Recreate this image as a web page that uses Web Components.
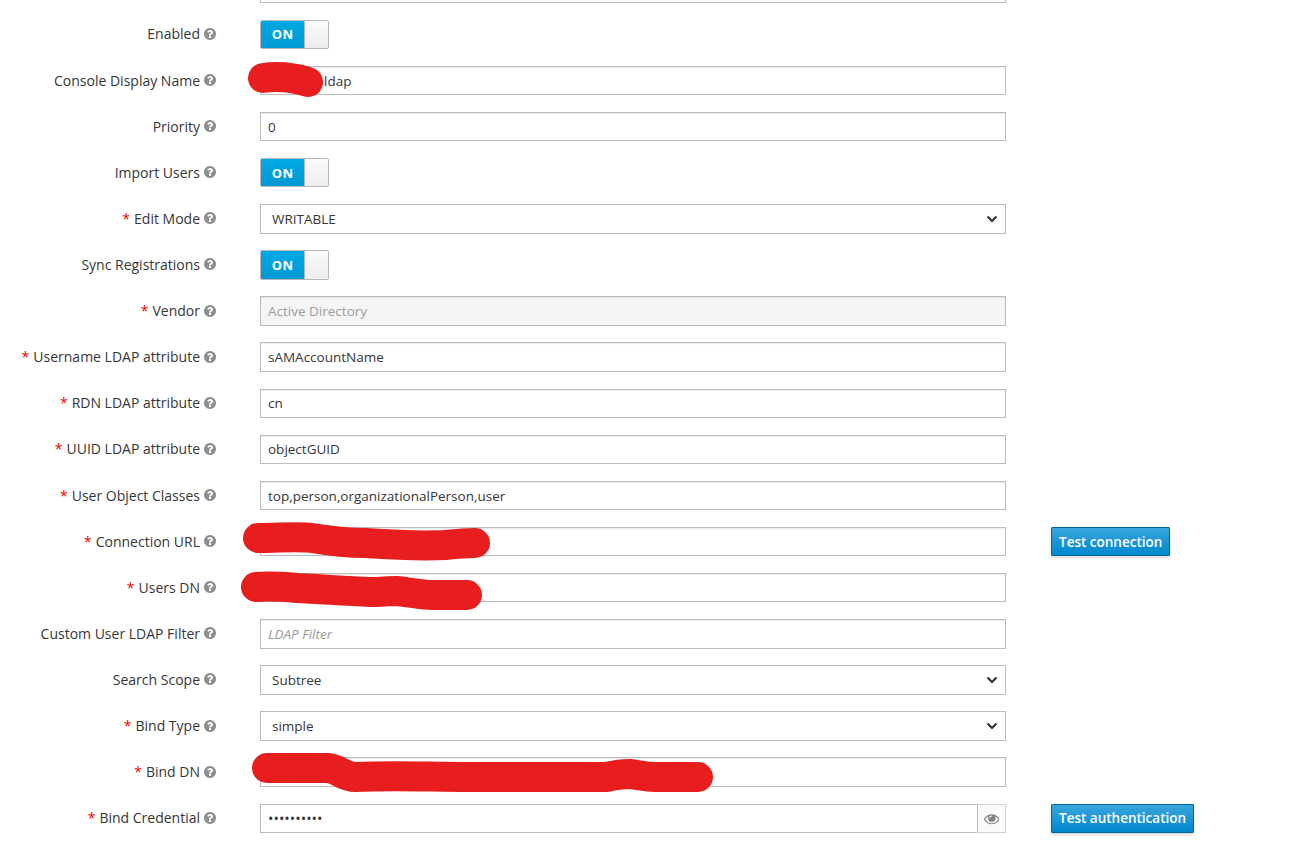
<!DOCTYPE html>
<html>
<head>
<meta charset="utf-8">
<title>LDAP settings</title>
<style>
	html, body
	{
		margin: 0;
		height: 856px;
		overflow: hidden;
		background: #fff;
		font-family: "Open Sans", "Noto Sans", sans-serif;
		font-size: 14px;
		color: #363636;
	}
</style>
</head>
<body>
<ldap-form>
	<kc-row><kc-input></kc-input></kc-row>
	<kc-row><span slot="label">Enabled</span><kc-switch></kc-switch></kc-row>
	<kc-row><span slot="label">Console Display Name</span><kc-input><span style="margin-left:56px">ldap</span></kc-input></kc-row>
	<kc-row><span slot="label">Priority</span><kc-input>0</kc-input></kc-row>
	<kc-row><span slot="label">Import Users</span><kc-switch></kc-switch></kc-row>
	<kc-row required><span slot="label">Edit Mode</span><kc-select>WRITABLE</kc-select></kc-row>
	<kc-row><span slot="label">Sync Registrations</span><kc-switch></kc-switch></kc-row>
	<kc-row required><span slot="label">Vendor</span><kc-input disabled>Active Directory</kc-input></kc-row>
	<kc-row required><span slot="label">Username LDAP attribute</span><kc-input>sAMAccountName</kc-input></kc-row>
	<kc-row required><span slot="label">RDN LDAP attribute</span><kc-input>cn</kc-input></kc-row>
	<kc-row required><span slot="label">UUID LDAP attribute</span><kc-input>objectGUID</kc-input></kc-row>
	<kc-row required><span slot="label">User Object Classes</span><kc-input>top,person,organizationalPerson,user</kc-input></kc-row>
	<kc-row required><span slot="label">Connection URL</span><kc-input></kc-input><kc-button slot="action">Test connection</kc-button></kc-row>
	<kc-row required><span slot="label">Users DN</span><kc-input></kc-input></kc-row>
	<kc-row><span slot="label">Custom User LDAP Filter</span><kc-input placeholder>LDAP Filter</kc-input></kc-row>
	<kc-row><span slot="label">Search Scope</span><kc-select>Subtree</kc-select></kc-row>
	<kc-row required><span slot="label">Bind Type</span><kc-select>simple</kc-select></kc-row>
	<kc-row required><span slot="label">Bind DN</span><kc-input></kc-input></kc-row>
	<kc-row required><span slot="label">Bind Credential</span><kc-password>••••••••••</kc-password><kc-button slot="action">Test authentication</kc-button></kc-row>
</ldap-form>
<red-scribbles></red-scribbles>

<script>
const HELP_PATH = "M1024 1376v-192q0-14-9-23t-23-9h-192q-14 0-23 9t-9 23v192q0 14 9 23t23 9h192q14 0 23-9t9-23zm256-672q0-88-55.5-163t-138.5-116-170-41q-243 0-371 213-15 24 8 42l132 100q7 6 19 6 16 0 25-12 53-68 86-92 34-24 86-24 48 0 85.5 26t37.5 59q0 38-20 61t-68 45q-63 28-115.5 86.5t-52.5 125.5v36q0 14 9 23t23 9h192q14 0 23-9t9-23q0-19 21.5-49.5t54.5-49.5q32-18 49-28.5t46-35 44.5-48 28-60.5 12.5-81zm384 192q0 209-103 385.5t-279.5 279.5-385.5 103-385.5-103-279.5-279.5-103-385.5 103-385.5 279.5-279.5 385.5-103 385.5 103 279.5 279.5 103 385.5z";
const EYE_PATH = "M1664 960q-152-236-381-353 61 104 61 225 0 185-131.5 316.5t-316.5 131.5-316.5-131.5-131.5-316.5q0-121 61-225-229 117-381 353 133 205 333.5 326.5t434.5 121.5 434.5-121.5 333.5-326.5zm-720-384q0-20-14-34t-34-14q-125 0-214.5 89.5t-89.5 214.5q0 20 14 34t34 14 34-14 14-34q0-86 61-147t147-61q20 0 34-14t14-34zm848 384q0 34-20 69-140 230-376.5 368.5t-499.5 138.5-499.5-139-376.5-368q-20-35-20-69t20-69q140-229 376.5-368t499.5-139 499.5 139 376.5 368q20 35 20 69z";

class LdapForm extends HTMLElement
{
	constructor()
	{
		super();
		this.attachShadow({ mode: "open" });
		this.shadowRoot.innerHTML = `
			<style>
				:host
				{
					display: grid;
					grid-auto-rows: 46.12px;
					margin-top: -34.75px;
				}
			</style>
			<slot></slot>
		`;
	}
}

class KcRow extends HTMLElement
{
	constructor()
	{
		super();
		this.attachShadow({ mode: "open" });
		this.shadowRoot.innerHTML = `
			<style>
				:host
				{
					display: grid;
					grid-template-columns: 216px 746px auto;
					column-gap: 44px;
					align-items: center;
				}
				.label
				{
					display: flex;
					justify-content: flex-end;
					align-items: center;
					gap: 4px;
					white-space: nowrap;
					position: relative;
					top: -.5px;
				}
				.label.empty { visibility: hidden; }
				.star { color: #e00; }
				:host(:not([required])) .star { display: none; }
				svg { width: 12px; height: 12px; fill: #8b8d8f; flex: none; }
				.action { margin-left: 1px; }
			</style>
			<div class="label">
				<span class="star">*</span>
				<slot name="label"></slot>
				<svg viewBox="128 128 1536 1536"><path d="${HELP_PATH}"/></svg>
			</div>
			<slot></slot>
			<div class="action"><slot name="action"></slot></div>
		`;
		if (!this.querySelector("[slot=label]"))
			this.shadowRoot.querySelector(".label").classList.add("empty");
	}
}

class KcInput extends HTMLElement
{
	constructor()
	{
		super();
		this.attachShadow({ mode: "open" });
		this.shadowRoot.innerHTML = `
			<style>
				:host
				{
					display: flex;
					align-items: center;
					box-sizing: border-box;
					height: 29.5px;
					padding: 0 7px;
					border: 1px solid #bbb;
					background: #fff;
					box-shadow: inset 0 1px 1px rgba(3, 3, 3, .08);
					font-size: 13.5px;
					white-space: nowrap;
				}
				:host([disabled]) { background: #f5f5f5; color: #9c9c9c; }
				:host([placeholder]) { color: #999; font-style: italic; }
			</style>
			<slot></slot>
		`;
	}
}

class KcSelect extends HTMLElement
{
	constructor()
	{
		super();
		this.attachShadow({ mode: "open" });
		this.shadowRoot.innerHTML = `
			<style>
				:host
				{
					display: flex;
					align-items: center;
					justify-content: space-between;
					box-sizing: border-box;
					height: 29.5px;
					padding: 0 6px 0 11px;
					border: 1px solid #bbb;
					background: #fff;
					font-size: 13.5px;
				}
				svg { width: 14px; height: 14px; fill: none; stroke: #333; stroke-width: 2.2; }
			</style>
			<span><slot></slot></span>
			<svg viewBox="0 0 14 14"><path d="M2.5 4.5 7 9l4.5-4.5"/></svg>
		`;
	}
}

class KcPassword extends HTMLElement
{
	constructor()
	{
		super();
		this.attachShadow({ mode: "open" });
		this.shadowRoot.innerHTML = `
			<style>
				:host
				{
					display: flex;
					box-sizing: border-box;
					height: 29.5px;
					border: 1px solid #bbb;
					border-right-color: #d1d1d1;
					background: #fff;
				}
				.value { flex: 1; display: flex; align-items: center; padding-left: 7px; font-size: 14.5px; }
				.eye
				{
					width: 27px;
					display: flex;
					align-items: center;
					justify-content: center;
					background: #fafafa;
					border-left: 1px solid #bbb;
					box-shadow: 0 -1px 0 #d1d1d1, 0 1px 0 #d1d1d1;
				}
				svg { width: 15.5px; height: 15.5px; fill: #7f8183; }
			</style>
			<div class="value"><slot></slot></div>
			<div class="eye"><svg viewBox="0 0 1792 1792"><path d="${EYE_PATH}"/></svg></div>
		`;
	}
}

class KcSwitch extends HTMLElement
{
	constructor()
	{
		super();
		this.attachShadow({ mode: "open" });
		this.shadowRoot.innerHTML = `
			<style>
				:host
				{
					display: flex;
					box-sizing: border-box;
					width: 69px;
					height: 29.5px;
					border: 1px solid #b7b7b7;
					border-radius: 2px;
					overflow: hidden;
				}
				.on
				{
					width: 43px;
					display: flex;
					align-items: center;
					justify-content: center;
					background: linear-gradient(#00a9e4, #0099d3);
					color: #fff;
					font-weight: 700;
					font-size: 13px;
					letter-spacing: .3px;
				}
				.knob
				{
					flex: 1;
					border-left: 1px solid #b7b7b7;
					background: linear-gradient(#fafafa, #ededed);
				}
			</style>
			<div class="on">ON</div>
			<div class="knob"></div>
		`;
	}
}

class KcButton extends HTMLElement
{
	constructor()
	{
		super();
		this.attachShadow({ mode: "open" });
		this.shadowRoot.innerHTML = `
			<style>
				:host
				{
					display: inline-flex;
					align-items: center;
					box-sizing: border-box;
					height: 29.5px;
					padding: 0 7px;
					border: 1px solid #00659c;
					border-radius: 1px;
					background: linear-gradient(#39a5dc, #0088ce);
					box-shadow: 0 2px 3px rgba(3, 3, 3, .15);
					color: #fff;
					font-size: 13.5px;
					font-weight: 600;
					white-space: nowrap;
				}
			</style>
			<slot></slot>
		`;
	}
}

// the red marker strokes drawn over the redacted values
class RedScribbles extends HTMLElement
{
	constructor()
	{
		super();
		this.attachShadow({ mode: "open" });
		this.shadowRoot.innerHTML = `
			<style>
				:host { position: absolute; left: 0; top: 0; pointer-events: none; }
				svg { display: block; }
				path { fill: none; stroke: #e81e1e; stroke-width: 30; stroke-linecap: round; stroke-linejoin: round; }
			</style>
			<svg width="1291" height="856">
				<path d="M263 78C278 76 295 78 308 82"/>
				<path d="M258 538C280 538 298 536 312 538C330 541 345 543 365 543C395 545 425 546 445 545C455 544 465 543 475 543"/>
				<path d="M256 587C270 586 285 587 297 588C320 589 345 591 370 592C380 592 388 591 396 591C410 592 420 595 433 595L467 595"/>
				<path d="M267 768L328 768C340 769 342 777 356 777C395 775 430 777 470 777L606 777C615 775 622 774 630 774C640 775 645 777 655 777L698 777"/>
			</svg>
		`;
	}
}

window.customElements.define("ldap-form", LdapForm);
window.customElements.define("kc-row", KcRow);
window.customElements.define("kc-input", KcInput);
window.customElements.define("kc-select", KcSelect);
window.customElements.define("kc-password", KcPassword);
window.customElements.define("kc-switch", KcSwitch);
window.customElements.define("kc-button", KcButton);
window.customElements.define("red-scribbles", RedScribbles);
</script>
</body>
</html>
